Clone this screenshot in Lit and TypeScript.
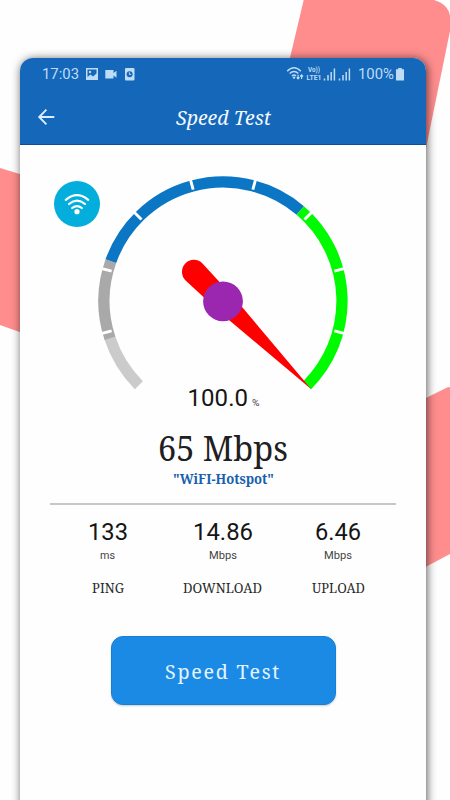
import { LitElement, html, css, svg } from "lit";
import { customElement, property } from "lit/decorators.js";

const point = (r: number, deg: number): string => {
  const a = (deg * Math.PI) / 180;
  return `${(125 + r * Math.cos(a)).toFixed(2)} ${(125 + r * Math.sin(a)).toFixed(2)}`;
};

const band = (from: number, to: number, color: string) => svg`
  <path fill="none" stroke=${color} stroke-width="11.3"
    d="M${point(119, from)}A119 119 0 0 1 ${point(119, to)}"></path>`;

/** A line of text fitted to a fixed measure. */
@customElement("fit-text")
export class FitText extends LitElement {
  @property() text = "";
  @property({ type: Number }) width = 100;
  @property({ type: Number }) height = 20;
  @property({ type: Number }) baseline = 15;

  static styles = css`
    :host { display: block; line-height: 0; }
    svg { display: block; overflow: visible; }
    text { fill: currentColor; }
  `;

  render() {
    return html`<svg width=${this.width} height=${this.height}>
      <text x="0" y=${this.baseline} textLength=${this.width} lengthAdjust="spacingAndGlyphs">${this.text}</text>
    </svg>`;
  }
}

@customElement("speed-gauge")
export class SpeedGauge extends LitElement {
  static styles = css`
    :host { display: block; width: 250px; height: 234px; }
    svg { display: block; overflow: visible; }
    .value { font: 24px Roboto, sans-serif; fill: #151515; }
    .unit { font: 9.5px Roboto, sans-serif; fill: #444; }
  `;

  render() {
    return html`<svg width="250" height="234" viewBox="0 0 250 234">
      ${band(135, 162, "#cbcbcb")}
      ${band(161.8, 199.6, "#a9a9a9")}
      ${band(199.6, 310.5, "#0b76c4")}
      ${band(310.5, 405, "#00fb00")}
      ${[165, 195, 225, 255, 285, 315, 345, 375].map(
        (a) => svg`<path stroke="#fff" stroke-width="2.9" d="M${point(125.2, a)}L${point(115.3, a)}"></path>`
      )}
      <path fill="#f00" d="M87.3 87.6A12 12 0 0 1 104.5 87.4L139 125L213.3 213.2L125 139L87.6 104.5A12 12 0 0 1 87.3 87.6Z"></path>
      <circle cx="125" cy="125.3" r="19.9" fill="#9b27b0"></circle>
      <text class="value" x="89.5" y="229.8" textLength="60.5">100.0</text>
      <text class="unit" x="154" y="229.8" textLength="7.5" lengthAdjust="spacingAndGlyphs">%</text>
    </svg>`;
  }
}

@customElement("app-root")
export class AppRoot extends LitElement {
  static styles = css`
    * { box-sizing: border-box; }
    :host {
      display: block; position: relative; width: 450px; height: 800px;
      overflow: hidden; background: #fefefe; color: #202020;
      font-family: "Noto Serif", "Droid Serif", "DejaVu Serif Condensed", "DejaVu Serif", serif;
    }
    svg { display: block; }
    .backdrop { position: absolute; inset: 0; }
    .wrap { display: flow-root; }
    .phone {
      position: relative; width: 406px; height: 760px; margin: 58px 0 0 20px;
      border-radius: 13px; background: #fefefe;
      box-shadow: 1px 1px 10px 0 rgba(0, 0, 0, .65);
    }
    .head {
      height: 87px; background: #1467b9; border-radius: 13px 13px 0 0;
      border-bottom: 1px solid #0b4d98; color: #f4faff;
    }
    .status {
      height: 32px; display: flex; align-items: center; color: #bddcf6;
      padding: 0 21px 0 22px;
    }
    .status fit-text { font-family: Roboto, sans-serif; font-size: 15.5px; }
    .left { margin-left: 6px; }
    .right { margin-left: auto; margin-right: 7px; }
    .lte { font: 700 7px Roboto, sans-serif; }
    .vo { font-size: 6.5px; }
    .bar { height: 53px; display: grid; grid-template-columns: 1fr auto 1fr; align-items: center; }
    .back { margin-left: 17px; }
    .title { font-style: italic; font-size: 20.5px; }
    .body { display: flex; flex-direction: column; align-items: center; }
    .dial { width: 100%; display: flex; padding: 31px 0 0 34px; }
    .wifi {
      width: 46px; height: 46px; border-radius: 50%; background: #04aedc; margin-top: 5px;
      display: flex; align-items: center; justify-content: center;
    }
    speed-gauge { margin-left: -2px; }
    .speed { font-size: 34px; margin-top: 20px; }
    .network { font-size: 13.5px; font-weight: 700; color: #1861ae; margin-top: 1px; }
    .rule { width: 346px; height: 2px; background: #c7c7c7; margin-top: 14px; }
    .stats { width: 346px; display: grid; grid-template-columns: repeat(3, 1fr); }
    .stat { display: flex; flex-direction: column; align-items: center; }
    .num { font: 24px Roboto, sans-serif; color: #151515; margin-top: 13px; }
    .unit { font: 11px Roboto, sans-serif; color: #444; margin-top: 2px; }
    .label { font-size: 13.5px; color: #2a2a2a; margin-top: 17px; }
    .start {
      width: 225px; height: 69px; border: 1px solid #1680d8; border-radius: 12px; background: #1b8ae5;
      color: #e4f4ff; margin: 43px 0 0 0; padding: 0; display: flex; align-items: center;
      justify-content: center; font-family: inherit; font-size: 20.5px; letter-spacing: 1.8px;
      box-shadow: 0 1px 2px rgba(0, 0, 0, .2);
    }
  `;

  private stat(num: string, nw: number, unit: string, uw: number, label: string, lw: number) {
    return html`<div class="stat">
      <fit-text class="num" text=${num} width=${nw} height="24" baseline="22"></fit-text>
      <fit-text class="unit" text=${unit} width=${uw} height="14" baseline="15.2"></fit-text>
      <fit-text class="label" text=${label} width=${lw} height="18" baseline="17.5"></fit-text>
    </div>`;
  }

  render() {
    return html`
      <svg class="backdrop" width="450" height="800" fill="#ff8d8d">
        <path d="M303.7 0H434Q448 4 450 16V31L424 158L280 100Z"></path>
        <path d="M0 168L28 176.5V335L0 325Z"></path>
        <path d="M418 402L444 389Q447 387 450 387V554L418 571Z"></path>
      </svg>
      <div class="wrap"><div class="phone">
        <div class="head">
          <div class="status">
            <fit-text text="17:03" width="37" height="18" baseline="14.2"></fit-text>
            <svg class="left" width="52" height="14" fill="currentColor">
              <path fill-rule="evenodd" d="M1 1H13V13H1ZM2.5 2.5V10L5.5 7.5L8 9.5L11.5 6.5V2.5Z"></path>
              <circle cx="5" cy="5" r="1.2"></circle>
              <path d="M20.3 3H28.5V6L31.5 3.8V10.7L28.5 8.5V11.5H20.3Z"></path>
              <rect x="40" y="1" width="9.5" height="12.5" rx="1"></rect>
              <circle cx="44.6" cy="7.2" r="3" fill="#1467b9"></circle>
              <path d="M44.4 5.3V7.4H46.2" fill="none" stroke="currentColor"></path>
            </svg>
            <svg class="right" width="63" height="16" overflow="visible">
              <g fill="none" stroke="currentColor" stroke-width="1.4">
                <path d="M-0.8 5.2Q6 -1.8 12.8 5.2M1.6 7.6Q6 3.4 10.4 7.6M3.9 9.9Q6 8 8.1 9.9"></path>
                <path stroke-width="1.2" d="M10.1 8.8V12.8M8.7 11.3L10.1 12.9L11.5 11.3M13.6 12.9V9.1M12.2 10.5L13.6 8.9L15 10.5"></path>
                <path stroke-width="1.5" d="M36.5 14.5V12.5M40 14.5V9M43.2 14.5V6M46.4 14.5V2.5M51.5 14.5V12.5M55 14.5V9M58.2 14.5V6M61.4 14.5V2.5"></path>
              </g>
              <circle cx="6" cy="11.6" r="1.2" fill="currentColor"></circle>
              <g class="lte" fill="currentColor">
                <text class="vo" x="20" y="6.2" textLength="12" lengthAdjust="spacingAndGlyphs">Vo))</text>
                <text x="18.5" y="14.4" textLength="15" lengthAdjust="spacingAndGlyphs">LTE1</text>
              </g>
            </svg>
            <fit-text text="100%" width="36" height="18" baseline="14.2"></fit-text>
            <svg width="11" height="14" fill="currentColor"><path d="M4.2 1H7.8V2.3H10V13.5H2V2.3H4.2Z"></path></svg>
          </div>
          <div class="bar">
            <svg class="back" width="18" height="18" fill="none" stroke="#d9edff" stroke-width="1.9">
              <path d="M17.3 9H2.5M9.4 1.7L2.2 9L9.4 16.3"></path>
            </svg>
            <fit-text class="title" text="Speed Test" width="95" height="26" baseline="21"></fit-text>
          </div>
        </div>
        <div class="body">
          <div class="dial">
            <div class="wifi">
              <svg width="28" height="26" fill="none" stroke="#fff" stroke-width="2.2" stroke-linecap="round">
                <path d="M2.8 8.8Q14 -0.7 25.2 8.8M6 13Q14 6.3 22 13M9.2 17Q14 13.2 18.8 17"></path>
                <circle cx="14" cy="20.7" r="2.6" fill="#fff" stroke="none"></circle>
              </svg>
            </div>
            <speed-gauge></speed-gauge>
          </div>
          <fit-text class="speed" text="65 Mbps" width="130" height="40" baseline="31"></fit-text>
          <fit-text class="network" text='"WiFI-Hotspot"' width="101" height="18" baseline="13.2"></fit-text>
          <div class="rule"></div>
          <div class="stats">
            ${this.stat("133", 40, "ms", 15, "PING", 32)}
            ${this.stat("14.86", 60, "Mbps", 28, "DOWNLOAD", 79)}
            ${this.stat("6.46", 46, "Mbps", 28, "UPLOAD", 53)}
          </div>
          <button class="start"><fit-text text="Speed Test" width="116" height="28" baseline="22"></fit-text></button>
        </div>
      </div></div>`;
  }
}
